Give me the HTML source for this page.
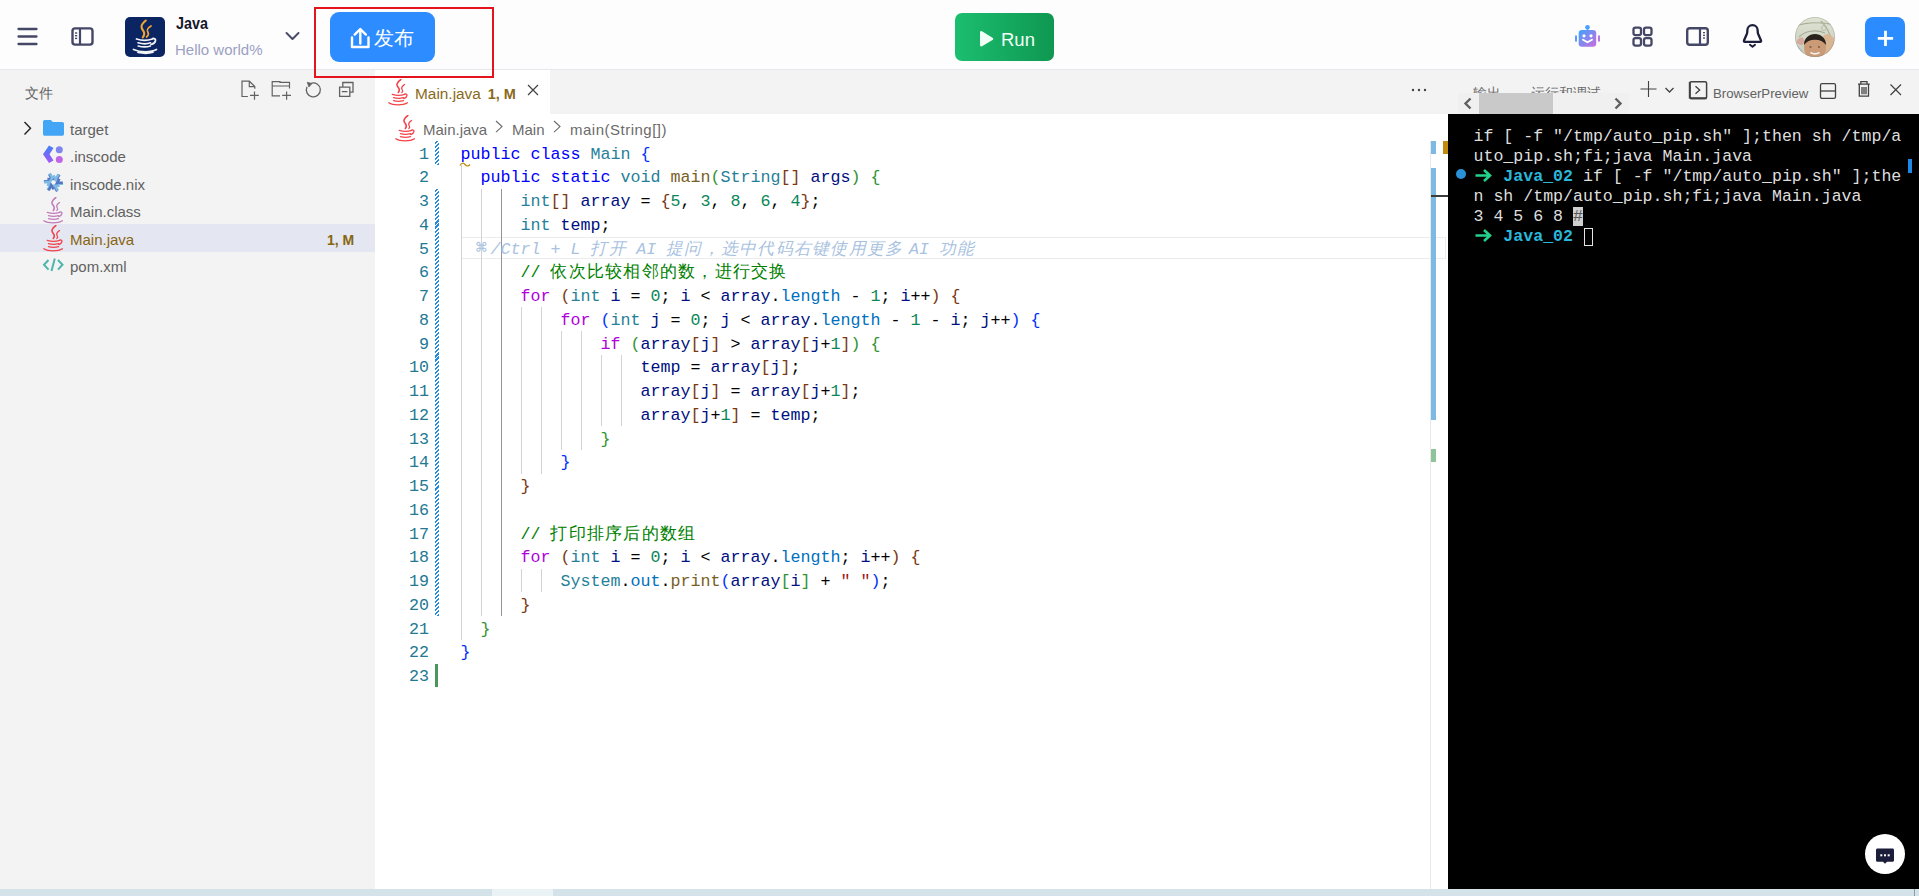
<!DOCTYPE html>
<html><head><meta charset="utf-8">
<style>
html,body{margin:0;padding:0;}
body{width:1919px;height:896px;overflow:hidden;position:relative;background:#fff;font-family:"Liberation Sans",sans-serif;}
.a{position:absolute;}
svg{position:absolute;overflow:visible;}
#hdr{left:0;top:0;width:1919px;height:69px;background:#fdfdfe;border-bottom:1px solid #e6e7ec;}
#side{left:0;top:70px;width:375px;height:819px;background:#f3f3f3;}
#ed{left:375px;top:70px;width:1073px;height:819px;background:#fff;}
#tabbar{left:550px;top:70px;width:898px;height:44px;background:#f3f3f3;}
#phdr{left:1448px;top:70px;width:471px;height:44px;background:#f3f3f3;}
#term{left:1448px;top:114px;width:471px;height:775px;background:#000;}
#bbar{left:0;top:889px;width:1919px;height:7px;background:#d4e3ea;}
.code{font-family:"Liberation Mono",monospace;font-size:16.67px;line-height:23.75px;white-space:pre;}
.ln{position:absolute;left:390px;width:39px;text-align:right;color:#237893;}
.cl{position:absolute;left:460.5px;height:23.75px;}
.cj{display:inline-block;letter-spacing:1.23px;overflow:visible;vertical-align:top}
.tree{position:absolute;left:70px;font-size:15px;color:#616161;}
</style></head><body>
<div id="hdr" class="a"></div>
<div id="side" class="a"></div>
<div id="ed" class="a"></div>
<div id="tabbar" class="a"></div>
<div id="phdr" class="a"></div>
<div id="term" class="a"></div>
<div id="bbar" class="a"><div class="a" style="left:492px;top:0;width:61px;height:7px;background:#ebf2f6"></div></div>

<!-- header -->
<svg style="left:0;top:0" width="120" height="69">
 <g stroke="#454766" stroke-width="2.3" stroke-linecap="round">
  <line x1="18.5" y1="29" x2="36.5" y2="29"/><line x1="18.5" y1="36.5" x2="36.5" y2="36.5"/><line x1="18.5" y1="44" x2="36.5" y2="44"/>
 </g>
 <rect x="72.5" y="28.4" width="20" height="16.2" rx="2.6" fill="none" stroke="#454766" stroke-width="2.4"/>
 <line x1="80" y1="28.4" x2="80" y2="44.6" stroke="#454766" stroke-width="2.2"/>
 <g fill="#454766"><rect x="75" y="32.3" width="2.2" height="1.4"/><rect x="75" y="35" width="2.2" height="1.4"/><rect x="75" y="37.7" width="2.2" height="1.4"/></g>
</svg>
<div class="a" style="left:125px;top:17px;width:40px;height:40px;border-radius:5px;background:#0a2562"></div>
<svg style="left:125px;top:17px" width="40" height="40" viewBox="0 0 40 40">
 <path d="M20.8 3.5C15 8.5 16 10.5 18.3 13.8C20 16.2 19.5 18 17.8 20.3" fill="none" stroke="#f2a531" stroke-width="2.1" stroke-linecap="round"/>
 <path d="M26 9C22 11.5 21.5 13 23 15.5C23.8 17 23.5 18.5 21.5 20" fill="none" stroke="#f2a531" stroke-width="1.7" stroke-linecap="round"/>
 <path d="M11.5 22C16 23.6 23 23.6 27.5 22M13 25.8C17 26.9 22.5 26.9 25.5 25.8M13.2 29C17 30 22.3 30 25.3 29M27.5 21.5C32 21 31.5 26 26 27.5M8.5 32.5C15 35.5 26 35.5 31.5 32.5M13 35.5C18 36.5 24 36.5 28 35.3" fill="none" stroke="#f2f3f7" stroke-width="1.7" stroke-linecap="round"/>
</svg>
<div class="a" style="left:176px;top:12.5px;font-size:16.5px;font-weight:bold;color:#15162a;line-height:20px;transform:scaleX(.87);transform-origin:0 0">Java</div>
<div class="a" style="left:175px;top:41px;font-size:15px;color:#9ca1c2;line-height:18px">Hello world%</div>
<svg style="left:280px;top:25px" width="26" height="22">
 <path d="M6.5 8L12.5 14L18.5 8" fill="none" stroke="#4a4d6a" stroke-width="2" stroke-linecap="round" stroke-linejoin="round"/>
</svg>

<div class="a" style="left:330px;top:12px;width:105px;height:50px;border-radius:9px;background:#2d8cff"></div>
<svg style="left:330px;top:12px" width="105" height="50">
 <path d="M22 25.5v9.5h16.5v-9.5" fill="none" stroke="#fff" stroke-width="2.4" stroke-linecap="round" stroke-linejoin="round"/>
 <path d="M30.3 31.5V17.3M24.7 22.6l5.6-5.6l5.6 5.6" fill="none" stroke="#fff" stroke-width="2.4" stroke-linecap="round" stroke-linejoin="round"/>
</svg>
<div class="a" style="left:374px;top:26px;font-size:20px;color:#fff;line-height:24px;letter-spacing:0px">发布</div>
<div class="a" style="left:955px;top:13px;width:99px;height:48px;border-radius:7px;background:linear-gradient(90deg,#1bbe6f,#0f9751)"></div>
<svg style="left:955px;top:13px" width="99" height="48">
 <path d="M25 18.5v13.5c0 1.3 1 1.8 2 1.2l10.5-6.3c1-.6 1-1.6 0-2.2L27 18.3c-1-.6-2-.1-2 1.2z" fill="#f2fff7"/>
</svg>
<div class="a" style="left:1001px;top:28px;font-size:18.5px;color:#f2fff7;line-height:24px">Run</div>
<!-- right icons -->
<svg style="left:1570px;top:20px" width="36" height="34">
 <defs><linearGradient id="rg" x1="0" y1="0" x2="1" y2="1"><stop offset="0" stop-color="#3ea3ff"/><stop offset="1" stop-color="#cc6bdc"/></linearGradient></defs>
 <circle cx="17.5" cy="7.2" r="2.3" fill="#45a0ff"/>
 <rect x="16.7" y="8.5" width="1.6" height="2.5" fill="#55a0ff"/>
 <rect x="8.7" y="10" width="17.5" height="16.7" rx="3.3" fill="url(#rg)"/>
 <rect x="5" y="15.3" width="2" height="6.5" rx="1" fill="#5a9cff"/>
 <rect x="28" y="15.3" width="2" height="6.5" rx="1" fill="#b875e6"/>
 <circle cx="14" cy="15.8" r="1.6" fill="#fff"/><circle cx="21" cy="15.8" r="1.6" fill="#fff"/>
 <path d="M13 19.7l4.5 2.6l4.5-2.6" fill="none" stroke="#fff" stroke-width="1.9" stroke-linecap="round" stroke-linejoin="round"/>
</svg>
<svg style="left:1625px;top:20px" width="34" height="34">
 <g fill="none" stroke="#454766" stroke-width="2.3">
  <rect x="8.5" y="7.6" width="7.5" height="7.5" rx="2"/><rect x="19" y="7.6" width="7.5" height="7.5" rx="2"/>
  <rect x="8.5" y="18.1" width="7.5" height="7.5" rx="2"/><rect x="19" y="18.1" width="7.5" height="7.5" rx="2"/>
 </g>
</svg>
<svg style="left:1680px;top:20px" width="36" height="34">
 <rect x="7.2" y="8.2" width="20.6" height="16.5" rx="2.5" fill="none" stroke="#454766" stroke-width="2.4"/>
 <line x1="20" y1="8.2" x2="20" y2="24.7" stroke="#454766" stroke-width="2.2"/>
 <g fill="#454766"><rect x="23" y="12" width="2" height="1.3"/><rect x="23" y="14.7" width="2" height="1.3"/><rect x="23" y="17.4" width="2" height="1.3"/></g>
</svg>
<svg style="left:1735px;top:20px" width="34" height="34">
 <path d="M9 20.5l2.8-6.5c.3-.8.5-1.7.5-2.5v-.8c0-3.3 2.2-5.5 5.2-5.5s5.2 2.2 5.2 5.5v.8c0 .8.2 1.7.5 2.5l2.8 6.5c.3.7 0 1.3-.8 1.3H9.8c-.8 0-1.1-.6-.8-1.3z" fill="none" stroke="#1e1f3c" stroke-width="2.3" stroke-linejoin="round"/>
 <path d="M15 24.8l2.5 2l2.5-2" fill="none" stroke="#1e1f3c" stroke-width="2" stroke-linecap="round" stroke-linejoin="round"/>
</svg>
<svg style="left:1795px;top:17px" width="40" height="40" viewBox="0 0 40 40">
 <defs><clipPath id="avc"><circle cx="20" cy="20" r="20"/></clipPath>
 <linearGradient id="avbg" x1="0" y1="0" x2="0" y2="1"><stop offset="0" stop-color="#dfe3d4"/><stop offset=".55" stop-color="#d2d6c6"/><stop offset="1" stop-color="#c9ccbc"/></linearGradient></defs>
 <g clip-path="url(#avc)">
  <rect x="0" y="0" width="40" height="40" fill="url(#avbg)"/>
  <path d="M-2 10C8 6 22 4 40 8M4 20C10 14 20 12 30 16M26 4C30 8 34 14 36 22" fill="none" stroke="#a9ad98" stroke-width="1.1"/>
  <circle cx="29" cy="11" r="2.5" fill="none" stroke="#b5b9a6" stroke-width=".9"/>
  <path d="M0 28C4 30 8 32 10 40H0z" fill="#b9c4c0"/>
  <path d="M1.5 26c0-3 3-6 6-5.5l2.5 4l-3 4z" fill="#d6a99c"/>
  <path d="M25 24c2-5 6-8 10-6.5l4 4v14l-8 2z" fill="#d8b593"/>
  <ellipse cx="20" cy="30.5" rx="11" ry="12.5" fill="#cb9b78"/>
  <path d="M9 28c0-7 5-11 11-11s11 4 11 11c-2.5-3.5-6-5.3-11-5.3s-8.5 1.8-11 5.3z" fill="#2a221d"/>
  <ellipse cx="15.5" cy="30" rx="1.2" ry=".8" fill="#6b4a38"/><ellipse cx="24" cy="30" rx="1.2" ry=".8" fill="#6b4a38"/>
  <path d="M15.5 35.5c3 1.8 6 1.8 9 0" stroke="#f3ede6" stroke-width="1.8" fill="none"/>
 </g>
 <circle cx="20" cy="20" r="19.6" fill="none" stroke="#8a8c78" stroke-width=".6" opacity=".6"/>
</svg>
<div class="a" style="left:1865px;top:17px;width:40px;height:40px;border-radius:8px;background:#2b8cff"></div>
<svg style="left:1865px;top:17px" width="40" height="40">
 <path d="M20.5 13.8v15.3M12.8 21.4h15.3" stroke="#fff" stroke-width="2.8"/>
</svg>


<!-- java icon symbol -->
<svg width="0" height="0" style="left:0;top:0">
 <defs>
  <symbol id="jv" viewBox="0 0 20 27">
   <path d="M12.8 0.5C8 4 8.3 6 10.3 8.5C11.8 10.5 11.5 12 10.3 13.5" fill="none" stroke="currentColor" stroke-width="1.6" stroke-linecap="round"/>
   <path d="M16.5 5.5C13.5 7.5 13 9 14.3 11C15 12 14.8 12.8 13.8 13.5" fill="none" stroke="currentColor" stroke-width="1.3" stroke-linecap="round"/>
   <path d="M4.3 15.3C8 16.5 13 16.5 16.8 15.3M5.5 18.6C8.5 19.5 12.5 19.5 15.5 18.6M5.5 21.7C8.5 22.6 12.5 22.6 15.5 21.7M16.8 15C19.8 14.5 20 17.8 15.8 19.6M0.8 23.8C5 26.6 15 26.6 19.5 23.8" fill="none" stroke="currentColor" stroke-width="1.3" stroke-linecap="round"/>
  </symbol>
 </defs>
</svg>
<!-- sidebar -->
<div class="a" style="left:25px;top:84px;font-size:14px;color:#616161;line-height:18px">文件</div>
<svg style="left:236px;top:78px" width="130" height="26">
 <g fill="none" stroke="#616161" stroke-width="1.2">
  <path d="M11.9 18.5H6V3.2h7.3l5.5 5.4v2.1M13.3 3.2v5.4h5.5"/>
  <path d="M14 17.4h8.8M18.5 13.4v8.4"/>
  <path d="M44 17.8h-7.8V3.6h7.8v.7h9.5v6.2M36.2 8h17.3"/>
  <path d="M46.2 17.4h8.8M50.6 13.4v8.4"/>
  <path d="M75 5.3a7 7 0 1 1-4 3.6" stroke-width="1.3"/>
  <path d="M71.3 4.3l4.6 1.3l-3 3.4z" fill="#616161" stroke-width=".8"/>
  <path d="M103.6 9.2h10.2v9.2h-10.2zM106.8 9.2V4.5h10.2v9.6h-3.2M105.8 13.6h5.6" stroke-width="1.3"/>
 </g>
</svg>
<!-- tree -->
<svg style="left:20px;top:118px" width="16" height="20"><path d="M4.5 4l6 6.2l-6 6.2" fill="none" stroke="#222" stroke-width="1.4"/></svg>
<svg style="left:43px;top:119px" width="21" height="18">
 <path d="M0 2.8c0-1 .8-1.8 1.8-1.8h6l2 2h9.4c1 0 1.8.8 1.8 1.8v10.1c0 1-.8 1.8-1.8 1.8H1.8c-1 0-1.8-.8-1.8-1.8z" fill="#42a5f5"/>
</svg>
<div class="tree" style="top:120px;line-height:20px">target</div>
<svg style="left:43px;top:145px" width="21" height="20">
 <defs><linearGradient id="ig" x1="0" y1="0" x2="0" y2="1"><stop offset="0" stop-color="#3b82f6"/><stop offset="1" stop-color="#a855f7"/></linearGradient>
 <linearGradient id="ig2" x1="0" y1="0" x2="0" y2="1"><stop offset="0" stop-color="#7b8cf0"/><stop offset="1" stop-color="#c061e8"/></linearGradient></defs>
 <path d="M6 0.5l4.5 2.5l-4 6.2l4 6.3L6 18L0 9.2z" fill="url(#ig)"/>
 <circle cx="16.3" cy="4.7" r="3.5" fill="#7f86ee"/><circle cx="16.3" cy="14.5" r="3.5" fill="#c065e6"/>
</svg>
<div class="tree" style="top:147px;line-height:20px">.inscode</div>
<svg style="left:43px;top:173px" width="21" height="19" viewBox="0 0 21 19"><g transform="translate(10.5 9.4) scale(1.05)"><g transform="rotate(0)"><path d="M-5.8 -3.2L3.2 -3.2L5.6 -7.3M-1.5 -3.2L-4.2 -7.8" fill="none" stroke="#5277c3" stroke-width="2.4"/></g><g transform="rotate(60)"><path d="M-5.8 -3.2L3.2 -3.2L5.6 -7.3M-1.5 -3.2L-4.2 -7.8" fill="none" stroke="#7ebae4" stroke-width="2.4"/></g><g transform="rotate(120)"><path d="M-5.8 -3.2L3.2 -3.2L5.6 -7.3M-1.5 -3.2L-4.2 -7.8" fill="none" stroke="#5277c3" stroke-width="2.4"/></g><g transform="rotate(180)"><path d="M-5.8 -3.2L3.2 -3.2L5.6 -7.3M-1.5 -3.2L-4.2 -7.8" fill="none" stroke="#7ebae4" stroke-width="2.4"/></g><g transform="rotate(240)"><path d="M-5.8 -3.2L3.2 -3.2L5.6 -7.3M-1.5 -3.2L-4.2 -7.8" fill="none" stroke="#5277c3" stroke-width="2.4"/></g><g transform="rotate(300)"><path d="M-5.8 -3.2L3.2 -3.2L5.6 -7.3M-1.5 -3.2L-4.2 -7.8" fill="none" stroke="#7ebae4" stroke-width="2.4"/></g></g></svg>
<div class="tree" style="top:175px;line-height:20px">inscode.nix</div>
<svg style="left:43px;top:197px;color:#c17dbb" width="20" height="27"><use href="#jv"/></svg>
<div class="tree" style="top:202px;line-height:20px">Main.class</div>
<div class="a" style="left:0;top:224px;width:375px;height:28px;background:#e4e6f1"></div>
<svg style="left:43px;top:225px;color:#f2434a" width="20" height="27"><use href="#jv"/></svg>
<div class="tree" style="top:229.5px;line-height:20px;color:#876511">Main.java</div>
<div class="a" style="left:327px;top:229.5px;font-size:14px;font-weight:bold;color:#876511;line-height:20px">1, M</div>
<svg style="left:43px;top:258px" width="21" height="14">
 <path d="M5.5 2L1 6.8l4.5 4.8M15 2l4.5 4.8L15 11.6M11.8 0.5L8.5 13" fill="none" stroke="#4db6ac" stroke-width="2"/>
</svg>
<div class="tree" style="top:256.5px;line-height:20px">pom.xml</div>
<!-- editor tab -->
<div class="a" style="left:375px;top:70px;width:175px;height:44px;background:#fff"></div>
<svg style="left:388px;top:78.5px;color:#f2434a" width="20" height="27"><use href="#jv"/></svg>
<div class="a" style="left:415px;top:84px;font-size:15.4px;color:#8a6a1a;line-height:20px;white-space:pre">Main.java <b style="font-size:14.5px;margin-left:2.5px">1, M</b></div>
<svg style="left:524px;top:81px" width="18" height="18"><path d="M4 4l10 10M14 4L4 14" stroke="#424242" stroke-width="1.2"/></svg>
<svg style="left:1405px;top:84px" width="28" height="12"><g fill="#424242"><circle cx="8" cy="6" r="1.2"/><circle cx="14" cy="6" r="1.2"/><circle cx="20" cy="6" r="1.2"/></g></svg>
<!-- breadcrumbs -->
<svg style="left:395px;top:114.5px;color:#f2434a" width="20" height="27"><use href="#jv"/></svg>
<div class="a" style="left:423px;top:120px;font-size:15px;color:#6b6b6b;line-height:20px">Main.java</div>
<svg style="left:492px;top:118px" width="14" height="16"><path d="M4 3l6 5.6l-6 5.6" fill="none" stroke="#6b6b6b" stroke-width="1.1"/></svg>
<div class="a" style="left:512px;top:120px;font-size:15px;color:#6b6b6b;line-height:20px">Main</div>
<svg style="left:550px;top:118px" width="14" height="16"><path d="M4 3l6 5.6l-6 5.6" fill="none" stroke="#6b6b6b" stroke-width="1.1"/></svg>
<div class="a" style="left:570px;top:120px;font-size:15px;color:#6b6b6b;line-height:20px;letter-spacing:.5px">main(String[])</div>

<!-- code -->
<div class="a" style="left:461px;top:236.70px;width:984px;height:20.25px;border-top:1.5px solid #ececec;border-bottom:1.5px solid #ececec;border-right:1.5px solid #ececec;box-sizing:content-box"></div>
<div class="a" style="left:461px;top:164.95px;width:1px;height:475.00px;background:#d3d3d3"></div>
<div class="a" style="left:481px;top:188.70px;width:1px;height:427.50px;background:#d3d3d3"></div>
<div class="a" style="left:501px;top:188.70px;width:1px;height:427.50px;background:#939393"></div>
<div class="a" style="left:521px;top:307.45px;width:1px;height:166.25px;background:#d3d3d3"></div>
<div class="a" style="left:541px;top:307.45px;width:1px;height:166.25px;background:#d3d3d3"></div>
<div class="a" style="left:521px;top:568.70px;width:1px;height:23.75px;background:#d3d3d3"></div>
<div class="a" style="left:541px;top:568.70px;width:1px;height:23.75px;background:#d3d3d3"></div>
<div class="a" style="left:561px;top:331.20px;width:1px;height:118.75px;background:#d3d3d3"></div>
<div class="a" style="left:581px;top:331.20px;width:1px;height:118.75px;background:#d3d3d3"></div>
<div class="a" style="left:601px;top:354.95px;width:1px;height:71.25px;background:#d3d3d3"></div>
<div class="a" style="left:621px;top:354.95px;width:1px;height:71.25px;background:#d3d3d3"></div>
<div class="a" style="left:435px;top:141.20px;width:4px;height:23.75px;background:repeating-linear-gradient(-45deg,#238bdc 0 1.45px,transparent 1.45px 2.85px)"></div>
<div class="a" style="left:435px;top:188.70px;width:4px;height:427.50px;background:repeating-linear-gradient(-45deg,#238bdc 0 1.45px,transparent 1.45px 2.85px)"></div>
<div class="a" style="left:435px;top:663.70px;width:3px;height:23.75px;background:#48985d"></div>
<div class="ln code" style="top:142.60px">1</div>
<div class="ln code" style="top:166.35px">2</div>
<div class="ln code" style="top:190.10px">3</div>
<div class="ln code" style="top:213.85px">4</div>
<div class="ln code" style="top:237.60px">5</div>
<div class="ln code" style="top:261.35px">6</div>
<div class="ln code" style="top:285.10px">7</div>
<div class="ln code" style="top:308.85px">8</div>
<div class="ln code" style="top:332.60px">9</div>
<div class="ln code" style="top:356.35px">10</div>
<div class="ln code" style="top:380.10px">11</div>
<div class="ln code" style="top:403.85px">12</div>
<div class="ln code" style="top:427.60px">13</div>
<div class="ln code" style="top:451.35px">14</div>
<div class="ln code" style="top:475.10px">15</div>
<div class="ln code" style="top:498.85px">16</div>
<div class="ln code" style="top:522.60px">17</div>
<div class="ln code" style="top:546.35px">18</div>
<div class="ln code" style="top:570.10px">19</div>
<div class="ln code" style="top:593.85px">20</div>
<div class="ln code" style="top:617.60px">21</div>
<div class="ln code" style="top:641.35px">22</div>
<div class="ln code" style="top:665.10px">23</div>
<div class="cl code" style="top:142.60px"><span style="color:#0000ff">public</span> <span style="color:#0000ff">class</span> <span style="color:#267f99">Main</span> <span style="color:#0431fa">{</span></div>
<div class="cl code" style="top:166.35px">  <span style="color:#0000ff">public</span> <span style="color:#0000ff">static</span> <span style="color:#267f99">void</span> <span style="color:#795e26">main</span><span style="color:#319331">(</span><span style="color:#267f99">String</span><span style="color:#7b3814">[]</span> <span style="color:#001080">args</span><span style="color:#319331">)</span> <span style="color:#319331">{</span></div>
<div class="cl code" style="top:190.10px">      <span style="color:#267f99">int</span><span style="color:#7b3814">[]</span> <span style="color:#001080">array</span> = <span style="color:#7b3814">{</span><span style="color:#098658">5</span>, <span style="color:#098658">3</span>, <span style="color:#098658">8</span>, <span style="color:#098658">6</span>, <span style="color:#098658">4</span><span style="color:#7b3814">}</span>;</div>
<div class="cl code" style="top:213.85px">      <span style="color:#267f99">int</span> <span style="color:#001080">temp</span>;</div>
<div class="cl code" style="top:261.35px">      <span style="color:#008000">// <span class="cj" style="width:232.70px">依次比较相邻的数，进行交换</span></span></div>
<div class="cl code" style="top:285.10px">      <span style="color:#af00db">for</span> <span style="color:#7b3814">(</span><span style="color:#267f99">int</span> <span style="color:#001080">i</span> = <span style="color:#098658">0</span>; <span style="color:#001080">i</span> &lt; <span style="color:#001080">array</span>.<span style="color:#0070c1">length</span> - <span style="color:#098658">1</span>; <span style="color:#001080">i</span>++<span style="color:#7b3814">)</span> <span style="color:#7b3814">{</span></div>
<div class="cl code" style="top:308.85px">          <span style="color:#af00db">for</span> <span style="color:#0431fa">(</span><span style="color:#267f99">int</span> <span style="color:#001080">j</span> = <span style="color:#098658">0</span>; <span style="color:#001080">j</span> &lt; <span style="color:#001080">array</span>.<span style="color:#0070c1">length</span> - <span style="color:#098658">1</span> - <span style="color:#001080">i</span>; <span style="color:#001080">j</span>++<span style="color:#0431fa">)</span> <span style="color:#0431fa">{</span></div>
<div class="cl code" style="top:332.60px">              <span style="color:#af00db">if</span> <span style="color:#319331">(</span><span style="color:#001080">array</span><span style="color:#7b3814">[</span><span style="color:#001080">j</span><span style="color:#7b3814">]</span> &gt; <span style="color:#001080">array</span><span style="color:#7b3814">[</span><span style="color:#001080">j</span>+<span style="color:#098658">1</span><span style="color:#7b3814">]</span><span style="color:#319331">)</span> <span style="color:#319331">{</span></div>
<div class="cl code" style="top:356.35px">                  <span style="color:#001080">temp</span> = <span style="color:#001080">array</span><span style="color:#7b3814">[</span><span style="color:#001080">j</span><span style="color:#7b3814">]</span>;</div>
<div class="cl code" style="top:380.10px">                  <span style="color:#001080">array</span><span style="color:#7b3814">[</span><span style="color:#001080">j</span><span style="color:#7b3814">]</span> = <span style="color:#001080">array</span><span style="color:#7b3814">[</span><span style="color:#001080">j</span>+<span style="color:#098658">1</span><span style="color:#7b3814">]</span>;</div>
<div class="cl code" style="top:403.85px">                  <span style="color:#001080">array</span><span style="color:#7b3814">[</span><span style="color:#001080">j</span>+<span style="color:#098658">1</span><span style="color:#7b3814">]</span> = <span style="color:#001080">temp</span>;</div>
<div class="cl code" style="top:427.60px">              <span style="color:#319331">}</span></div>
<div class="cl code" style="top:451.35px">          <span style="color:#0431fa">}</span></div>
<div class="cl code" style="top:475.10px">      <span style="color:#7b3814">}</span></div>
<div class="cl code" style="top:522.60px">      <span style="color:#008000">// <span class="cj" style="width:143.20px">打印排序后的数组</span></span></div>
<div class="cl code" style="top:546.35px">      <span style="color:#af00db">for</span> <span style="color:#7b3814">(</span><span style="color:#267f99">int</span> <span style="color:#001080">i</span> = <span style="color:#098658">0</span>; <span style="color:#001080">i</span> &lt; <span style="color:#001080">array</span>.<span style="color:#0070c1">length</span>; <span style="color:#001080">i</span>++<span style="color:#7b3814">)</span> <span style="color:#7b3814">{</span></div>
<div class="cl code" style="top:570.10px">          <span style="color:#267f99">System</span>.<span style="color:#0070c1">out</span>.<span style="color:#795e26">print</span><span style="color:#0431fa">(</span><span style="color:#001080">array</span><span style="color:#319331">[</span><span style="color:#001080">i</span><span style="color:#319331">]</span> + <span style="color:#a31515">" "</span><span style="color:#0431fa">)</span>;</div>
<div class="cl code" style="top:593.85px">      <span style="color:#7b3814">}</span></div>
<div class="cl code" style="top:617.60px">  <span style="color:#319331">}</span></div>
<div class="cl code" style="top:641.35px"><span style="color:#0431fa">}</span></div>
<div class="cl code" style="top:237.60px;left:472.6px;color:#a9c2e0;font-style:italic"><span class="cj" style="width:17.9px;font-size:19px;padding-left:3px;box-sizing:border-box;font-style:normal">⌘</span>/Ctrl + L <span class="cj" style="width:35.80px">打开</span> AI <span class="cj" style="width:232.70px">提问，选中代码右键使用更多</span> AI <span class="cj" style="width:35.80px">功能</span></div>
<svg style="left:459px;top:161px" width="14" height="6"><path d="M1 4.5q2.5-4 5-1t5 0" fill="none" stroke="#bf8803" stroke-width="1.2"/></svg>
<!-- overview ruler -->
<div class="a" style="left:1430px;top:141px;width:1px;height:748px;background:#e8e8e8"></div>
<div class="a" style="left:1431px;top:141.3px;width:5.3px;height:12.5px;background:#7cb9e3"></div>
<div class="a" style="left:1443px;top:141.3px;width:5px;height:12.5px;background:#c48a0e"></div>
<div class="a" style="left:1431px;top:168.2px;width:5.3px;height:251.8px;background:#7cb9e3"></div>
<div class="a" style="left:1431px;top:195px;width:17px;height:2px;background:#3c3c3c"></div>
<div class="a" style="left:1431px;top:448.8px;width:5.3px;height:13.2px;background:#8fc49a"></div>
<!-- panel header -->
<div class="a" style="left:1473px;top:80px;width:140px;height:13.3px;overflow:hidden;font-size:14px;color:#6a6a6a;line-height:20px;white-space:pre"><span class="a" style="left:0;top:3px">输出</span><span class="a" style="left:58px;top:3px">运行和调试</span></div>
<div class="a" style="left:1458px;top:93.3px;width:171px;height:20.6px;background:#f0f0f0"></div>
<div class="a" style="left:1479px;top:93.3px;width:74px;height:20.6px;background:#c9c9c9"></div>
<svg style="left:1458px;top:93px" width="172" height="21">
 <path d="M12.5 5.5l-5 5l5 5M157.5 5.5l5 5l-5 5" fill="none" stroke="#5f5f5f" stroke-width="2.4"/>
</svg>
<svg style="left:1635px;top:76px" width="45" height="26">
 <path d="M13.5 5v16M5.5 13h16" stroke="#424242" stroke-width="1.1"/>
 <path d="M30.5 12l4 4l4-4" fill="none" stroke="#424242" stroke-width="1.3"/>
</svg>
<svg style="left:1685px;top:77px" width="26" height="26">
 <rect x="4.8" y="4.8" width="16.8" height="16.6" rx="1.5" fill="none" stroke="#424242" stroke-width="1.5"/>
 <path d="M5 21.3h16.5M4.8 5v16.5" stroke="#424242" stroke-width="2"/>
 <path d="M10.5 9.2l4.2 3.8l-4.2 3.8" fill="none" stroke="#424242" stroke-width="1.3"/>
</svg>
<div class="a" style="left:1713px;top:84.5px;font-size:13.2px;color:#616161;line-height:18px">BrowserPreview</div>
<svg style="left:1815px;top:78px" width="26" height="26">
 <rect x="5.5" y="5.6" width="15" height="14.8" rx="1.6" fill="none" stroke="#424242" stroke-width="1.3"/>
 <path d="M5.5 13h15" stroke="#424242" stroke-width="1.3"/>
</svg>
<svg style="left:1851px;top:76px" width="26" height="26">
 <path d="M7 8.2h11.8M9.8 8v-2.4h6.2v2.4M8.3 8.5v11.7h9.2V8.5M11 11v7.2M13 11v7.2M15 11v7.2" fill="none" stroke="#424242" stroke-width="1.3"/>
</svg>
<svg style="left:1883px;top:77px" width="26" height="26"><path d="M7.5 7.5l10.5 10.5M18 7.5L7.5 18" stroke="#424242" stroke-width="1.2"/></svg>
<!-- terminal -->
<div class="a" style="left:1473.5px;top:127.4px;font-family:'Liberation Mono',monospace;font-size:16.58px;line-height:19.88px;color:#dedede;white-space:pre">if [ -f "/tmp/auto_pip.sh" ];then sh /tmp/a
uto_pip.sh;fi;java Main.java
<span style="display:inline-block;width:19.9px;height:16px;vertical-align:-2px;position:relative"><svg style="left:0;top:0" width="20" height="16"><path d="M1.5 8.5h14.5M10 3l6 5.5l-6 5.5" fill="none" stroke="#23d18b" stroke-width="2.6" stroke-linejoin="miter"/></svg></span> <span style="color:#29b8db;font-weight:bold">Java_02</span> if [ -f "/tmp/auto_pip.sh" ];the
n sh /tmp/auto_pip.sh;fi;java Main.java
3 4 5 6 8 <span style="background:#cfcfcf;color:#555">#</span>
<span style="display:inline-block;width:19.9px;height:16px;vertical-align:-2px;position:relative"><svg style="left:0;top:0" width="20" height="16"><path d="M1.5 8.5h14.5M10 3l6 5.5l-6 5.5" fill="none" stroke="#23d18b" stroke-width="2.6" stroke-linejoin="miter"/></svg></span> <span style="color:#29b8db;font-weight:bold">Java_02</span> </div>
<div class="a" style="left:1583.5px;top:227.5px;width:7.5px;height:16.5px;border:1px solid #e5e5e5"></div>
<div class="a" style="left:1456px;top:169px;width:10px;height:10px;border-radius:50%;background:#2a90d8"></div>
<div class="a" style="left:1908px;top:158.5px;width:3.5px;height:14px;background:#1e88e5"></div>
<!-- chat bubble -->
<div class="a" style="left:1865px;top:834px;width:40px;height:40px;border-radius:50%;background:#fff"></div>
<svg style="left:1865px;top:834px" width="40" height="40">
 <path d="M12.5 14.5h15c.9 0 1.5.6 1.5 1.5v10.3c0 .9-.6 1.5-1.5 1.5h-5.5l-2 2l-2-2h-5.5c-.9 0-1.5-.6-1.5-1.5V16c0-.9.6-1.5 1.5-1.5z" fill="#1c1d3b"/>
 <g fill="#fff"><rect x="15.3" y="20.3" width="2" height="2"/><rect x="19" y="20.3" width="2" height="2"/><rect x="22.7" y="20.3" width="2" height="2"/></g>
</svg>

<div class="a" style="left:314px;top:7px;width:176px;height:67px;border:2px solid #e5131d;z-index:10"></div>
<div class="a" style="left:1914px;top:889px;width:1px;height:7px;background:#8f9a9f"></div>

</body></html>
